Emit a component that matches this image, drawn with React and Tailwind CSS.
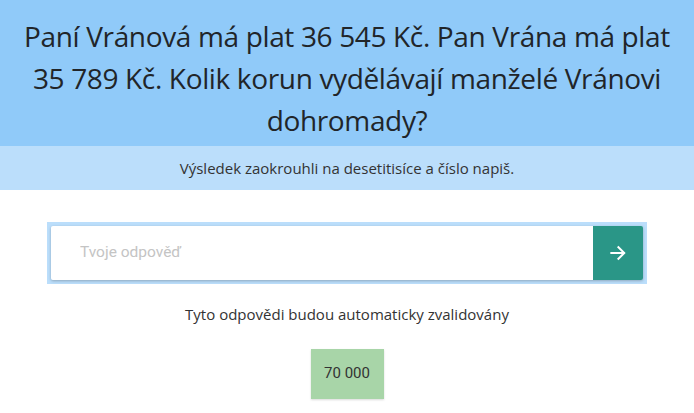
import React from 'react'

const ArrowRight = () => (
    <svg width="20" height="20" viewBox="0 0 24 24" fill="none" stroke="white" strokeWidth="2.4" strokeLinecap="square">
        <path d="M4 12h15" />
        <path d="M12.5 5l7 7-7 7" />
    </svg>
)

const question = 'Paní Vránová má plat 36\u00a0545 Kč. Pan Vrána má plat 35\u00a0789 Kč. Kolik korun vydělávají manželé Vránovi dohromady?'

const App = () => {
    return (
        <div className="w-[694px] h-[413px] bg-white font-['Open_Sans',sans-serif] text-[#212529]">
            <div className="bg-[#90caf9] px-2 pt-[15px] pb-[5px]">
                <h1 className="text-center text-[28px] leading-[42px] tracking-[-0.35px] text-[#212529]">
                    {question}
                </h1>
            </div>
            <div className="bg-[#bbdefb] h-[44px] flex items-center justify-center">
                <p className="text-[15px] text-[#333]">Výsledek zaokrouhli na desetitisíce a číslo napiš.</p>
            </div>
            <div className="flex flex-col items-center pt-8">
                <div className="w-[600px] bg-[#bbdefb] p-1">
                    <div className="flex h-[54px] shadow-[0_1px_3px_rgba(0,0,0,0.25)] rounded-[2px]">
                        <input
                            type="text"
                            placeholder="Tvoje odpověď"
                            className="flex-1 bg-white pl-[29px] text-[15.5px] font-['Roboto',sans-serif] outline-none placeholder:text-[#c4c4c4] rounded-l-[2px]"
                        />
                        <button className="w-[50px] bg-[#2a9687] flex items-center justify-center rounded-r-[2px]">
                            <ArrowRight />
                        </button>
                    </div>
                </div>
                <p className="mt-[19px] text-[15px] text-[#333]">Tyto odpovědi budou automaticky zvalidovány</p>
                <div className="mt-[23px] w-[73px] h-[50px] bg-[#a8d5a8] flex items-center justify-center shadow-[0_1px_2px_rgba(0,0,0,0.15)]">
                    <span className="text-[15px] font-['Roboto',sans-serif] text-[#333]">70 000</span>
                </div>
            </div>
        </div>
    )
}

export default App
